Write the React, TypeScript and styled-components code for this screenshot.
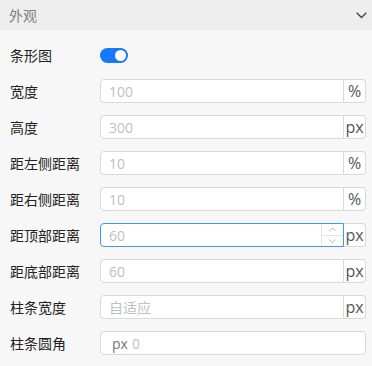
import React from "react";
import styled, { createGlobalStyle } from "styled-components";

const Global = createGlobalStyle`
	html, body {
		margin: 0;
		padding: 0;
		background: #f7f7f7;
		font-family: "Open Sans", "Noto Sans CJK SC", sans-serif;
	}
	* { box-sizing: border-box; }
`;

const Panel = styled.div`
	width: 372px;
	height: 366px;
	background: #f7f7f7;
	overflow: hidden;
`;

const Header = styled.div`
	height: 30px;
	background: #eeeeee;
	display: flex;
	align-items: center;
	justify-content: space-between;
	padding: 0 5px 0 9px;
	font-size: 14px;
	color: #808080;
`;

const Body = styled.div`
	display: flex;
	flex-direction: column;
	gap: 12px;
	padding: 13px 6px 0 10px;
`;

const Row = styled.div`
	height: 24px;
	display: flex;
	align-items: center;
`;

const Label = styled.div`
	width: 90px;
	flex-shrink: 0;
	font-size: 14px;
	color: #222;
`;

const Switch = styled.div`
	width: 28px;
	height: 15px;
	border-radius: 8px;
	background: #1677ff;
	display: flex;
	align-items: center;
	justify-content: flex-end;
	padding-right: 2px;

	&::after {
		content: "";
		width: 11px;
		height: 11px;
		border-radius: 50%;
		background: #fff;
	}
`;

const Field = styled.div<{ $focus?: boolean }>`
	flex: 1;
	height: 24px;
	display: flex;
	background: #fff;
	border: 1px solid ${(p) => (p.$focus ? "#4096ff" : "#d9d9d9")};
	border-radius: 4px;
	overflow: hidden;
`;

const Value = styled.div`
	flex: 1;
	display: flex;
	align-items: center;
	padding-left: 8px;
	font-size: 14px;
	color: #c0c0c0;
`;

const Prefix = styled.span`
	color: #777;
	margin: 0 4px 0 3px;
`;

const Spinner = styled.div`
	width: 22px;
	display: flex;
	flex-direction: column;
	border-left: 1px solid #e3e3e3;

	& > div {
		flex: 1;
		display: flex;
		align-items: center;
		justify-content: center;
	}
	& > div + div {
		border-top: 1px solid #e3e3e3;
	}
`;

const Wrap = styled.div<{ $focus?: boolean }>`
	flex: 1;
	display: flex;
	height: 24px;
	& > ${Field} {
		border-radius: 4px 0 0 4px;
	}
`;

const Addon = styled.div`
	width: 22px;
	flex-shrink: 0;
	display: flex;
	align-items: center;
	justify-content: center;
	background: #fff;
	border: 1px solid #d9d9d9;
	border-left: none;
	border-radius: 0 4px 4px 0;
	font-size: 16px;
	color: #555;
`;

const Chevron = ({ up, size = 7, color = "#aaa" }: { up?: boolean; size?: number; color?: string }) => (
	<svg width={size} height={size / 2 + 1} viewBox="0 0 8 5" fill="none">
		<path d={up ? "M0.5 4.5 L4 1 L7.5 4.5" : "M0.5 0.5 L4 4 L7.5 0.5"} stroke={color} strokeWidth="1" />
	</svg>
);

const rows = [
	{ label: "宽度", value: "100", unit: "%" },
	{ label: "高度", value: "300", unit: "px" },
	{ label: "距左侧距离", value: "10", unit: "%" },
	{ label: "距右侧距离", value: "10", unit: "%" },
	{ label: "距顶部距离", value: "60", unit: "px", focus: true },
	{ label: "距底部距离", value: "60", unit: "px" },
	{ label: "柱条宽度", value: "自适应", unit: "px" },
];

const App = () => (
	<Panel>
		<Global />
		<Header>
			<span>外观</span>
			<svg width="11" height="7" viewBox="0 0 11 7" fill="none">
				<path d="M0.7 0.7 L5.5 5.5 L10.3 0.7" stroke="#444" strokeWidth="1.3" />
			</svg>
		</Header>
		<Body>
			<Row>
				<Label>条形图</Label>
				<Switch />
			</Row>
			{rows.map((r) => (
				<Row key={r.label}>
					<Label>{r.label}</Label>
					<Wrap>
						<Field $focus={r.focus}>
							<Value>{r.value}</Value>
							{r.focus && (
								<Spinner>
									<div>
										<Chevron up />
									</div>
									<div>
										<Chevron />
									</div>
								</Spinner>
							)}
						</Field>
						<Addon>{r.unit}</Addon>
					</Wrap>
				</Row>
			))}
			<Row>
				<Label>柱条圆角</Label>
				<Field>
					<Value>
						<Prefix>px</Prefix>0
					</Value>
				</Field>
			</Row>
		</Body>
	</Panel>
);

export default App;
